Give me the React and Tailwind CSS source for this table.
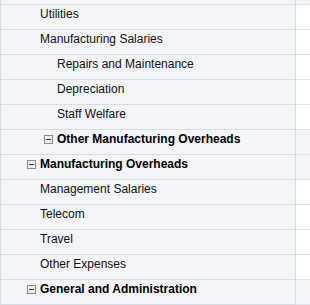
import React from "react";

const rows = [
  { label: "Utilities", level: 1 },
  { label: "Manufacturing Salaries", level: 1 },
  { label: "Repairs and Maintenance", level: 2 },
  { label: "Depreciation", level: 2 },
  { label: "Staff Welfare", level: 2 },
  { label: "Other Manufacturing Overheads", level: 2, group: true },
  { label: "Manufacturing Overheads", level: 1, group: true },
  { label: "Management Salaries", level: 1 },
  { label: "Telecom", level: 1 },
  { label: "Travel", level: 1 },
  { label: "Other Expenses", level: 1 },
  { label: "General and Administration", level: 1, group: true },
];

function MinusBox() {
  return (
    <span className="flex h-[9px] w-[9px] shrink-0 items-center justify-center border border-[#8c8c8c] bg-[#ececec]">
      <span className="h-px w-[5px] bg-[#3a3a3a]" />
    </span>
  );
}

export default function App() {
  return (
    <div
      className="w-[310px] h-[305px] overflow-hidden bg-white text-[12px] text-[#111]"
      style={{ fontFamily: '"Liberation Sans", Arial, sans-serif' }}
    >
      <div className="flex h-[5px]">
        <div className="w-[296px] shrink-0 border-l border-r border-b border-[#d7dde5] bg-[#f2f4f7]" />
        <div className="flex-1 border-b border-[#dfe4ea] bg-[#f2f4f7]" />
      </div>
      {rows.map((r) => (
        <div key={r.label} className="flex h-[25px]">
          <div
            className={
              "flex w-[296px] shrink-0 items-start border-l border-r border-b border-[#d7dde5] bg-[#f2f4f7] pt-[2px] leading-[14px] " +
              (r.level === 1 ? (r.group ? "pl-[26px]" : "pl-[39px]") : r.group ? "pl-[43px]" : "pl-[56px]")
            }
          >
            {r.group ? (
              <div className="flex items-center gap-[4px] font-bold text-black">
                <MinusBox />
                <span className="whitespace-nowrap">{r.label}</span>
              </div>
            ) : (
              <span className="whitespace-nowrap">{r.label}</span>
            )}
          </div>
          <div
            className={
              "flex-1 border-b border-[#dfe4ea] " + (r.group ? "bg-[#f2f4f7]" : "bg-white")
            }
          />
        </div>
      ))}
    </div>
  );
}
